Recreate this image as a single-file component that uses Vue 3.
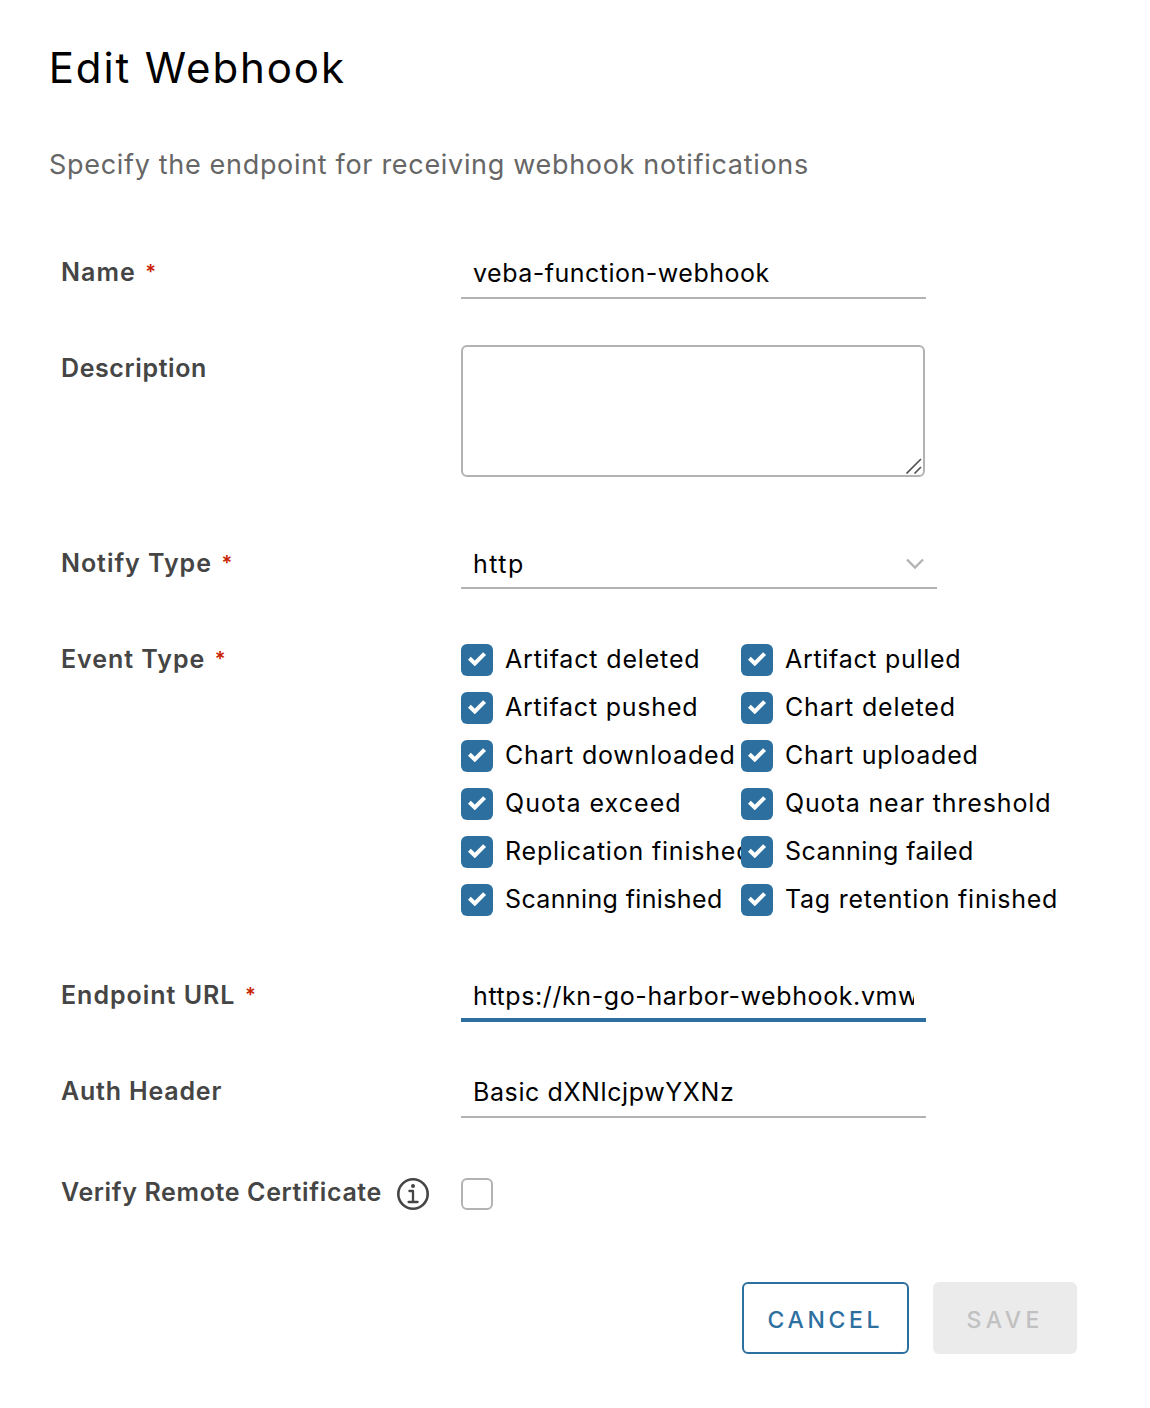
<script setup>
// Each label carries its own tracking value, in pixels.
const events = [
  { text: 'Artifact deleted', ls: 0.84 },
  { text: 'Artifact pulled', ls: 0.7 },
  { text: 'Artifact pushed', ls: 0.78 },
  { text: 'Chart deleted', ls: 0.8 },
  { text: 'Chart downloaded', ls: 0.8 },
  { text: 'Chart uploaded', ls: 0.78 },
  { text: 'Quota exceed', ls: 1.05 },
  { text: 'Quota near threshold', ls: 0.86 },
  { text: 'Replication finished', ls: 0.8 },
  { text: 'Scanning failed', ls: 0.43 },
  { text: 'Scanning finished', ls: 0.37 },
  { text: 'Tag retention finished', ls: 0.75 },
]
</script>

<template>
  <main class="dialog">
    <h1 class="title">Edit Webhook</h1>
    <p class="subtitle">Specify the endpoint for receiving webhook notifications</p>

    <form class="form" @submit.prevent>
      <div class="row">
        <label class="label ls-name">Name<span class="req">*</span></label>
        <div class="input"><span class="value ls-hook">veba-function-webhook</span></div>
      </div>

      <div class="row row-desc">
        <label class="label ls-desc">Description</label>
        <div class="textarea">
          <svg class="grip" width="16" height="16" viewBox="0 0 16 16">
            <path d="M0.5 15.5L15 1M8.5 15.5L15 9" fill="none" stroke="#555" stroke-width="1.7" />
          </svg>
        </div>
      </div>

      <div class="row">
        <label class="label ls-type">Notify Type<span class="req">*</span></label>
        <div class="select">
          <span class="value ls-http">http</span>
          <svg class="caret" width="20" height="14" viewBox="0 0 20 14">
            <path d="M2 2.5L10 10.5L18 2.5" fill="none" stroke="#b3b3b3" stroke-width="2.4" />
          </svg>
        </div>
      </div>

      <div class="row row-events">
        <label class="label ls-type">Event Type<span class="req">*</span></label>
        <div class="events">
          <div v-for="e in events" :key="e.text" class="event">
            <span class="box checked">
              <svg width="32" height="32" viewBox="0 0 32 32">
                <path d="M8.4 14.2L13.8 19.4L23.6 9.6" fill="none" stroke="#fff" stroke-width="4" />
              </svg>
            </span>
            <span class="event-text" :style="{ letterSpacing: e.ls + 'px' }">{{ e.text }}</span>
          </div>
        </div>
      </div>

      <div class="row">
        <label class="label ls-url">Endpoint URL<span class="req">*</span></label>
        <div class="input focused"><span class="value ls-basic">https://kn-go-harbor-webhook.vmw</span></div>
      </div>

      <div class="row row-auth">
        <label class="label ls-auth">Auth Header</label>
        <div class="input"><span class="value ls-basic">Basic dXNlcjpwYXNz</span></div>
      </div>

      <div class="row row-verify">
        <label class="label ls-verify">Verify Remote Certificate
          <svg class="info" width="32" height="32" viewBox="0 0 32 32">
            <circle cx="16" cy="16" r="14.7" fill="none" stroke="#454545" stroke-width="2.6" />
            <circle cx="16" cy="8" r="2" fill="#454545" />
            <path d="M12.4 13H16V24M11.6 24H20.6" fill="none" stroke="#454545" stroke-width="2.3" stroke-linecap="round" stroke-linejoin="round" />
          </svg>
        </label>
        <span class="box empty"></span>
      </div>
    </form>

    <footer class="actions">
      <button class="btn cancel" type="button">CANCEL</button>
      <button class="btn save" type="button" disabled>SAVE</button>
    </footer>
  </main>
</template>

<style>
body {
  background: #fff;
}
</style>

<style scoped>
.dialog {
  box-sizing: border-box;
  width: 1150px;
  height: 1408px;
  padding: 40px 0 0 48px;
  background: #fff;
  color: #000;
  font-family: Inter, "Open Sans", sans-serif;
  font-size: 25px;
  line-height: 48px;
  white-space: nowrap;
  overflow: hidden;
}
.title {
  margin: 0;
  height: 56px;
  line-height: 56px;
  font-size: 42px;
  font-weight: 400;
  letter-spacing: 1.9px;
  text-indent: 0.7px;
}
.subtitle {
  margin: 45px 0 0 1px;
  height: 48px;
  font-size: 27px;
  letter-spacing: 0.68px;
  color: #666;
}
.form {
  margin: 59px 0 0 13px;
}
.row {
  display: flex;
  align-items: flex-start;
  height: 96px;
}
.row-desc { height: 195px; }
.row-events { height: 336px; }
.row-auth { height: 101px; }
.row-verify { height: 114px; }
.label {
  display: flex;
  flex: 0 0 400px;
  font-weight: 600;
  color: #454545;
}
.req {
  margin-left: 9.5px;
  font-size: 20px;
  font-weight: 600;
  letter-spacing: 0;
  color: #c92100;
}
.input,
.select {
  display: flex;
  box-sizing: border-box;
  width: 465px;
  height: 50px;
  margin-top: 1px;
  padding: 0 12px;
  border-bottom: 2px solid #b3b3b3;
}
.input.focused {
  border-bottom: 4px solid #2d709f;
}
.value {
  flex: 1;
  overflow: hidden;
}
.select {
  width: 476px;
  height: 49px;
  align-items: center;
}
.caret {
  margin-top: 1px;
}
.textarea {
  display: flex;
  align-items: flex-end;
  justify-content: flex-end;
  box-sizing: border-box;
  width: 464px;
  height: 132px;
  margin-top: 1px;
  padding: 0 1px 1px 0;
  border: 2px solid #b3b3b3;
  border-radius: 6px;
}
.events {
  display: grid;
  grid-template-columns: 280px 340px;
  grid-auto-rows: 48px;
}
.event {
  display: flex;
  min-width: 0;
}
.event-text {
  margin-left: 12px;
}
.box {
  flex: none;
  box-sizing: border-box;
  width: 32px;
  height: 32px;
  border-radius: 6px;
}
.checked {
  position: relative;
  margin-top: 9px;
  background: #2d709f;
}
.checked svg {
  display: block;
}
.empty {
  margin-top: 10px;
  border: 2px solid #b3b3b3;
}
.info {
  margin: 10px 0 0 14.5px;
}
.actions {
  display: flex;
  gap: 24px;
  margin-left: 694px;
}
.btn {
  box-sizing: border-box;
  height: 72px;
  border: 0;
  border-radius: 6px;
  font: 500 23px/66px Inter, "Open Sans", sans-serif;
  text-align: left;
}
.cancel {
  width: 167px;
  padding: 3px 0 0 23.5px;
  border: 2px solid #2d709f;
  background: #fff;
  color: #2d709f;
  letter-spacing: 3.65px;
}
.save {
  width: 144px;
  padding: 3px 0 0 33.5px;
  background: #ebebeb;
  color: #c1c1c1;
  letter-spacing: 4.4px;
}
.ls-name { letter-spacing: 1.05px; }
.ls-desc { letter-spacing: 0.6px; }
.ls-type { letter-spacing: 0.96px; }
.ls-url { letter-spacing: 0.98px; }
.ls-auth { letter-spacing: 0.8px; }
.ls-verify { letter-spacing: 0.64px; }
.ls-hook { letter-spacing: 0.5px; }
.ls-http { letter-spacing: 1.5px; }
.ls-basic { letter-spacing: 0.6px; }
</style>
